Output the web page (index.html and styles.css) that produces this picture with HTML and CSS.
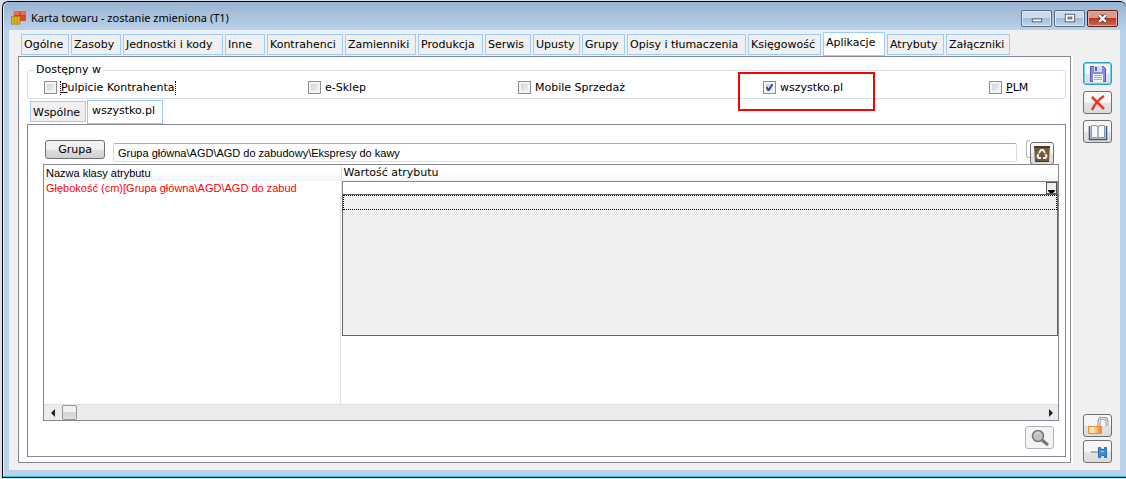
FILE: index.html
```html
<!DOCTYPE html>
<html lang="pl">
<head>
<meta charset="utf-8">
<title>Karta towaru</title>
<link rel="stylesheet" href="styles.css">
</head>
<body>
<div class="window">
  <header class="titlebar">
    <svg class="app-icon" viewBox="0 0 16 16"><path fill="#c3311b" d="M3 1h13v10H3z"/><path fill="#ef6b4b" d="M3 1h6v4H3zM10 1h6v4h-6z"/><path fill="#d94a2c" d="M10 6h6v4h-6z"/><path fill="#b58a12" d="M0 6h10v9H0z"/><path fill="#d9b52f" d="M1 7h2v7H1zM4 7h2v7H4zM7 7h2v7H7z"/></svg>
    <h1 class="title">Karta towaru - zostanie zmieniona (T1)</h1>
    <div class="caption-buttons">
      <button class="caption" aria-label="Minimalizuj"><svg viewBox="0 0 30 16"><rect x="10.5" y="8.500" width="10" height="3" fill="#fff" stroke="#555b66"/></svg></button>
      <button class="caption" aria-label="Maksymalizuj"><svg viewBox="0 0 30 16"><rect x="10.500" y="3.500" width="10" height="8" fill="#fff" stroke="#555b66"/><rect x="13.500" y="6.500" width="4" height="2" fill="#9db5d0" stroke="#555b66"/></svg></button>
      <button class="caption close" aria-label="Zamknij"><svg viewBox="0 0 30 16"><path d="M11.500 4.500l7 7M18.500 4.500l-7 7" stroke="#4b4b55" stroke-width="4.500"/><path d="M11.500 4.500l7 7M18.500 4.500l-7 7" stroke="#fff" stroke-width="2.500"/></svg></button>
    </div>
  </header>
  <div class="client">
    <main class="content">
      <nav class="tabs main-tabs">
        <button class="tab">Ogólne</button><button class="tab">Zasoby</button><button class="tab">Jednostki i kody</button><button class="tab">Inne</button><button class="tab">Kontrahenci</button><button class="tab">Zamienniki</button><button class="tab">Produkcja</button><button class="tab">Serwis</button><button class="tab">Upusty</button><button class="tab">Grupy</button><button class="tab">Opisy i tłumaczenia</button><button class="tab">Księgowość</button><button class="tab active">Aplikacje</button><button class="tab">Atrybuty</button><button class="tab">Załączniki</button>
      </nav>
      <section class="panel">
        <fieldset class="apps">
          <legend>Dostępny w</legend>
          <div class="checks">
            <label class="check"><input type="checkbox"><span class="focused"><u>P</u>ulpicie Kontrahenta</span></label>
            <label class="check"><input type="checkbox"><span>e-Sklep</span></label>
            <label class="check"><input type="checkbox"><span>Mobile Sprzedaż</span></label>
            <label class="check marked"><input type="checkbox" checked><span>wszystko.pl</span></label>
            <label class="check"><input type="checkbox"><span><u>P</u>LM</span></label>
          </div>
        </fieldset>
        <nav class="tabs sub-tabs">
          <button class="tab">Wspólne</button><button class="tab active">wszystko.pl</button>
        </nav>
        <section class="subpanel">
          <div class="group-row">
            <button class="push" id="group-button">Grupa</button>
            <input class="path" type="text" aria-labelledby="group-button" value="Grupa główna\AGD\AGD do zabudowy\Ekspresy do kawy">
            <div class="edge"></div>
            <button class="tool trash" aria-label="Usuń">
              <svg viewBox="0 0 18 18"><path fill="#735a3e" d="M1 1h16l-1 16H2z"/><path fill="#493823" d="M1 1h16v2H1zM2 16h14v1H2z"/><g fill="none" stroke="#f3eee5" stroke-width="2"><path d="M6 8l2-3h2l2 3M12.500 9l1 2-1 2H10M8 13H5.500l-1-2 1-2"/></g></svg>
            </button>
          </div>
          <div class="grid-box">
            <table class="grid">
              <thead><tr><th class="name">Nazwa klasy atrybutu</th><th>Wartość atrybutu</th></tr></thead>
              <tbody><tr>
                <td class="name"><div class="attr">Głębokość (cm)[Grupa główna\AGD\AGD do zabud</div></td>
                <td class="value">
                  <div class="combo">
                    <select aria-label="Wartość atrybutu"><option></option></select>
                    <svg class="arrow" viewBox="0 0 11 12"><rect x=".5" y=".5" width="10" height="11" fill="#eee" stroke="#555"/><path d="M2 8h7v1l-2 2H4L2 9z"/></svg>
                    <div class="list"><div class="option"></div></div>
                  </div>
                </td>
              </tr></tbody>
            </table>
            <div class="filler"></div>
            <div class="scroll">
              <button class="step" aria-label="W lewo"><svg viewBox="0 0 8 8"><path d="M6 0v8L2 4z" fill="#222"/></svg></button>
              <div class="thumb"></div>
              <button class="step last" aria-label="W prawo"><svg viewBox="0 0 8 8"><path d="M3 0v8l4-4z" fill="#222"/></svg></button>
            </div>
          </div>
          <div class="footer">
            <button class="tool find" aria-label="Szukaj"><svg viewBox="0 0 22 18"><path d="M13 11l6 5" stroke="#777" stroke-width="3"/><circle cx="9" cy="7" r="5.500" fill="#bfc1c3" stroke="#777" stroke-width="1.500"/><path d="M5 6q2-3 6-2" fill="none" stroke="#ddd"/></svg></button>
          </div>
        </section>
      </section>
    </main>
    <aside class="side">
      <button class="tool save" aria-label="Zapisz"><svg viewBox="0 0 22 18"><path d="M3.500 1.500h13l2 2v13h-15z" fill="#8a8dde" stroke="#5558ae"/><path d="M7 1h8v6H7z" fill="#d5d9ed"/><path d="M8 2h2v4H8z" fill="#5558ae"/><path d="M6 9h10v8H6z" fill="#f2f4f8"/><path d="M7 10.500h8M7 12.500h8M7 14.500h8" stroke="#a5a7b8"/></svg></button>
      <button class="tool" aria-label="Anuluj"><svg viewBox="0 0 22 18"><path d="M5 3l12 12M17 2Q9 7 5 16" fill="none" stroke="#e93a20" stroke-width="2.500"/></svg></button>
      <button class="tool" aria-label="Historia"><svg viewBox="0 0 22 18"><path d="M2.500 3v13.500h17V3" fill="none" stroke="#315a8b" stroke-width="1.500"/><path d="M4.500 2.500H9l2 1 2-1h4.500v12H13l-2 1-2-1H4.500z" fill="#f7f8fa" stroke="#8795a4"/><path d="M11 3v12" stroke="#6e7780"/></svg></button>
      <button class="tool lock" aria-label="Odblokuj"><svg viewBox="0 0 22 18"><defs><linearGradient id="gold"><stop stop-color="#ffd27a"/><stop offset=".3" stop-color="#ffe9b8"/><stop offset="1" stop-color="#e8821c"/></linearGradient></defs><path d="M12 9V5q0-4 4-4t4 4v4" fill="none" stroke="#999" stroke-width="3"/><path d="M12 9V5q0-4 4-4t4 4v4" fill="none" stroke="#eee"/><path d="M1.500 9.500h13v7h-13z" fill="url(#gold)" stroke="#dc9440"/></svg></button>
      <button class="tool" aria-label="Przypnij"><svg viewBox="0 0 22 18"><path d="M4 9h8" stroke="#999" stroke-width="1.500"/><path d="M11.500 4.500h2l1 2h3v-2h2v10h-2v-2h-3l-1 2h-2z" fill="#418bd0" stroke="#286baa"/><path d="M14 8.500h3" stroke="#9fd0f5"/></svg></button>
    </aside>
  </div>
</div>
</body>
</html>
```
FILE: styles.css
```css
*, *::after { box-sizing: border-box; }
body {
  margin: 0;
  padding: 1px 0 1px 2px;
  min-height: 100vh;
  display: flex;
  background: #d8e0f0;
  font-family: "DejaVu Sans", Verdana, sans-serif;
  font-size: 11px;
  line-height: 14px;
  color: #000;
}
button, input, select { font: inherit; color: inherit; margin: 0; padding: 0; }
svg { display: block; }
.window {
  flex: 1;
  min-width: 0;
  display: flex;
  flex-direction: column;
  background: linear-gradient(#99b4d1, #b9d1ea 28px);
  border: solid #000;
  border-width: 1px 0 1px 1px;
  border-radius: 6px 6px 0 0;
  box-shadow: inset 0 -1px #22c8dc, inset 1px 0 #e6f0fa;
  padding: 0 6px 7px 6px;
}
.titlebar { height: 28px; display: flex; align-items: center; padding: 4px 0 0 2px; gap: 5px; }
.app-icon { width: 15px; height: 16px; }
.title { flex: 1; margin: 0; font: 11px/16px "Noto Sans", "Open Sans", sans-serif; }
.caption-buttons { display: flex; gap: 2px; margin-right: 2px; }
.caption {
  width: 31px; height: 17px;
  border: 1px solid #5a6c83; border-radius: 2px;
  background: linear-gradient(#cbdcee 45%, #a3bdd9 50%, #bdd3ea);
  box-shadow: inset 0 0 0 1px #dbe8f4;
}
.caption svg { width: 29px; height: 15px; }
.caption.close { background: linear-gradient(#dc9a8b 45%, #b93822 50%, #cf6b50); border-color: #5b1f1a; box-shadow: inset 0 0 0 1px #e5aca0; }
.client { flex: 1; display: flex; background: #f0f0f0; padding: 2px 8px 7px 9px; }
.content { flex: 1; min-width: 0; display: flex; flex-direction: column; }
.tabs { display: flex; align-items: center; }
.tab {
  height: 21px; padding: 2px 2px 0;
  border: 1px solid #99ccff; background: #f0f0f0;
  text-align: left; white-space: nowrap;
}
.tab.active { height: 24px; background: #fff; padding-top: 0; padding-bottom: 3px; align-self: end; }
.main-tabs {
  height: 24px; padding-left: 3px;
  display: grid; column-gap: 2px;
  grid-template-columns: 48px 50px 100px 40px 76px 71px 65px 46px 47px 43px 119px 73px 62px 57px 64px;
}
.panel {
  flex: 1; display: flex; flex-direction: column;
  background: #fff; border: 1px solid #868692; box-shadow: 2px 0 #fff;
  padding: 6px 4px 5px 8px;
}
.apps { min-width: 0; margin: 0; padding: 0 0 0 16px; border: 1px solid #d5dfe5; border-radius: 3px; height: 36px; }
.apps legend { margin-left: -10px; padding: 0 2px; }
.checks { display: grid; grid-template-columns: 264fr 210fr 245fr 226fr 76fr; height: 21px; align-items: center; }
.check { display: flex; align-items: center; gap: 4px; white-space: nowrap; position: relative; }
.check input {
  appearance: none; width: 13px; height: 13px;
  border: 1px solid #8e8f8f;
  background: linear-gradient(135deg, #c9ccd1, #f7f7f7);
  box-shadow: inset 0 0 0 2px #f4f4f4;
}
.check input:checked {
  background: url("data:image/svg+xml,%3Csvg xmlns='http://www.w3.org/2000/svg' viewBox='0 0 11 11'%3E%3Cpath d='M2.500 5l2 3.500L8.500 2' fill='none' stroke='%23334a8c' stroke-width='2'/%3E%3C/svg%3E"), linear-gradient(135deg, #c9ccd1, #f7f7f7);
}
.focused { border: dotted #000; border-width: 0 1px; margin-left: -1px; }
.marked::after { content: ""; position: absolute; left: -25px; top: -9px; width: 137px; height: 39px; border: 2px solid #f00; }
.sub-tabs { height: 25px; padding-left: 3px; gap: 2px; }
.sub-tabs .tab { width: 56px; }
.sub-tabs .active { width: 76px; padding-left: 4px; margin-left: -1px; }
.subpanel { flex: 1; display: flex; flex-direction: column; border: 1px solid #868692; padding: 15px 6px 7px 15px; }
.group-row { height: 24px; display: flex; align-items: flex-start; padding-right: 5px; }
.push { width: 60px; height: 19px; margin-left: 2px; border: 1px solid #707070; border-radius: 3px; background: linear-gradient(#f3f3f3 48%, #dfdfdf 52%, #cfcfcf); }
.path { flex: 1; height: 19px; margin: 3px 9px 0 8px; padding: 0 4px; border: 1px solid #d5dde5; border-top-color: #abadb3; border-radius: 2px; font-family: "Liberation Sans", Arial, sans-serif; }
.edge { width: 4px; height: 18px; border: 1px solid #b0b4b8; border-right: 0; border-radius: 3px 0 0 3px; }
.tool { width: 29px; height: 23px; border: 1px solid #707070; border-radius: 3px; background: linear-gradient(#f6f6f6 48%, #e4e4e4 52%, #dadada); display: grid; place-items: center; flex: none; }
.tool svg { width: 22px; height: 18px; }
.trash { width: 24px; margin-top: 2px; position: relative; z-index: 1; }
.trash svg { width: 18px; }
.grid-box { flex: 1; display: flex; flex-direction: column; border: 1px solid #868692; }
.grid { width: 100%; border-collapse: collapse; table-layout: fixed; }
.grid th, .grid td { padding: 0; font-weight: normal; text-align: left; white-space: nowrap; }
.grid th { height: 16px; padding-left: 2px; background: linear-gradient(#fff 40%, #f2f4f7); }
.grid .name { width: 297px; font-family: "Liberation Sans", Arial, sans-serif; border-right: 1px solid #e3e3e3; }
.attr { padding-left: 2px; color: #f00; }
.combo { position: relative; height: 14px; }
.combo select { display: block; appearance: none; width: 100%; height: 14px; border: 1px solid #868692; border-radius: 0; background: #fff; }
.arrow { position: absolute; right: 1px; top: 1px; width: 11px; height: 12px; pointer-events: none; }
.list { position: absolute; left: 0; right: 0; top: 13px; height: 142px; border: 1px solid #646464; background: #f0f0f0; }
.option { height: 15px; border: 1px dotted #000; }
.filler { flex: 1; margin-left: 296px; border-left: 1px solid #e3e3e3; }
.scroll { height: 16px; display: flex; align-items: center; background: #ececec; border-top: 1px solid #e0e0e0; }
.step { width: 18px; height: 15px; border: 0; background: none; display: grid; place-items: center; }
.step svg { width: 8px; height: 8px; }
.last { margin-left: auto; width: 16px; }
.thumb { width: 15px; height: 15px; border: 1px solid #979797; border-radius: 2px; background: linear-gradient(#f3f3f3 45%, #d5d5d8 50%, #dedee0); }
.footer { display: flex; justify-content: flex-end; padding: 5px 5px 0 0; }
.find { border-color: #b0b4b8; background: #f4f4f4; }
.side { width: 41px; display: flex; flex-direction: column; align-items: flex-end; gap: 6px; padding-top: 30px; }
.save { border-color: #2c9ec4; box-shadow: inset 0 0 0 1px #6bd4f2; }
.lock { margin-top: auto; }
.side .tool:last-child { margin-top: -3px; }
```
